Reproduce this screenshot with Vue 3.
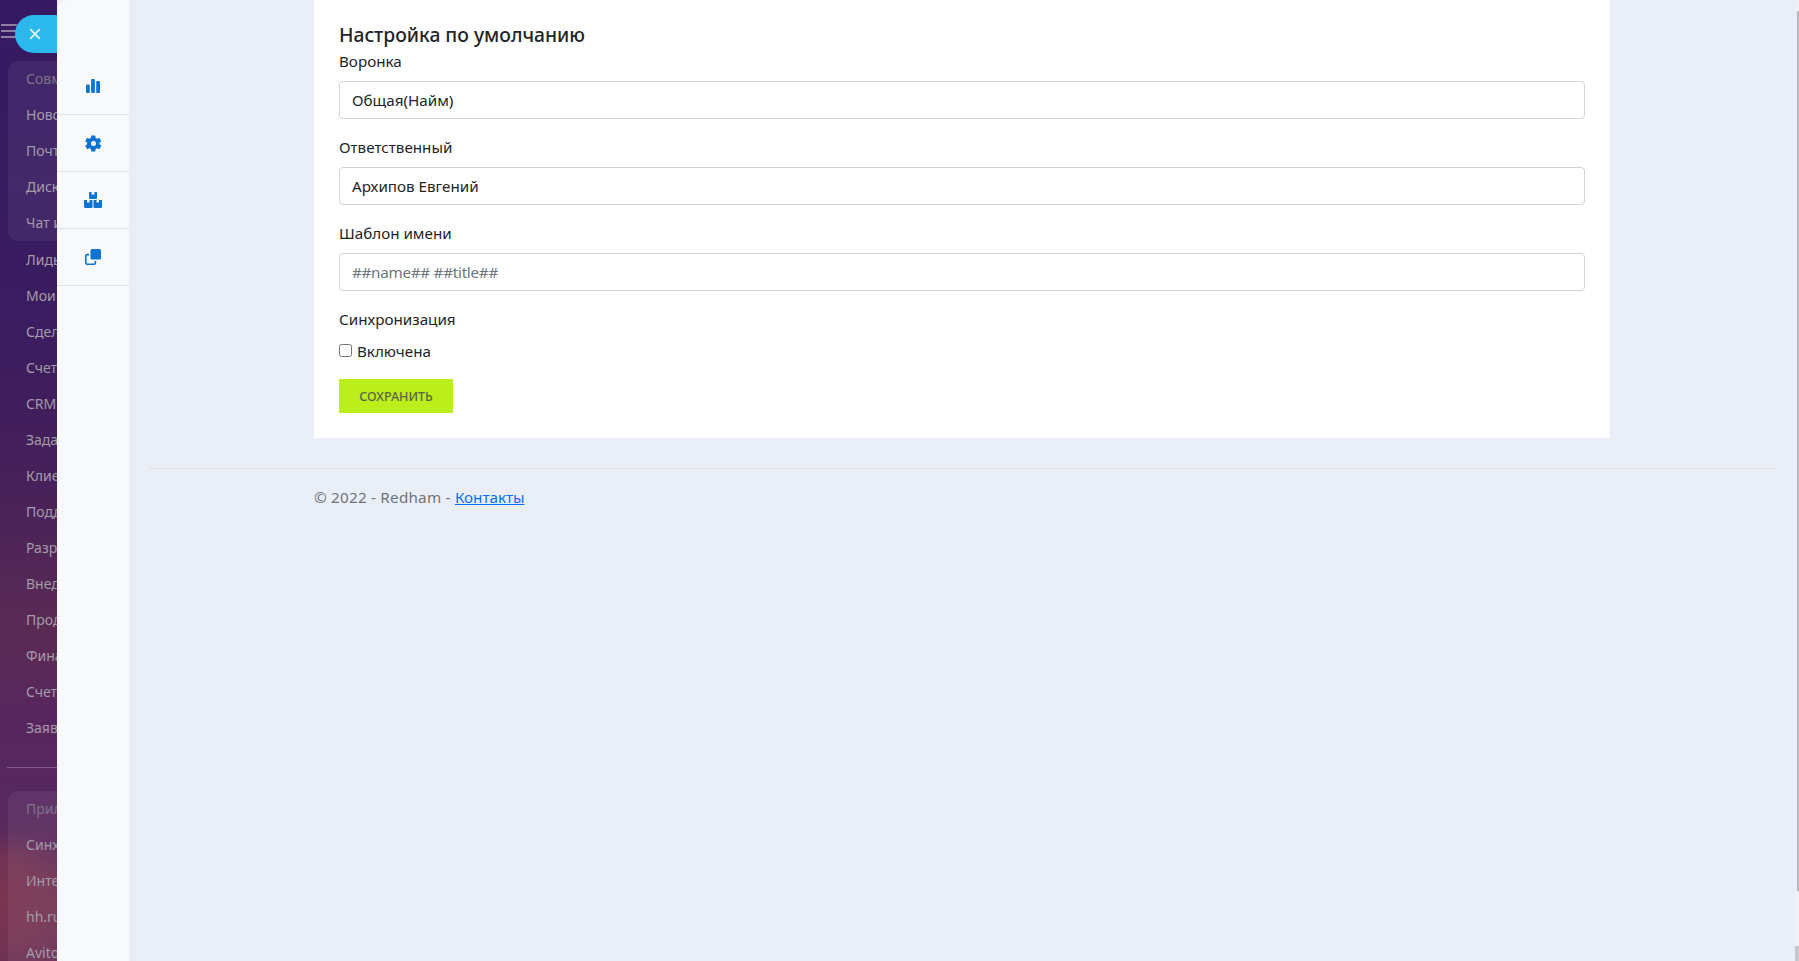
<script setup>
const topItems = ['Новости', 'Почта', 'Диск', 'Чат и звонки']
const midItems = ['Лиды', 'Мои', 'Сделки', 'Счета', 'CRM', 'Задачи', 'Клиенты', 'Поддержка', 'Разработка', 'Внедрение', 'Продажи', 'Финансы', 'Счета', 'Заявки']
const appItems = ['Синхронизация', 'Интеграции', 'hh.ru', 'Avito']
</script>

<template>
  <div class="page">
    <aside class="portal">
      <div class="portal__burger"><i></i><i></i><i></i></div>
      <div class="portal__group">
        <div class="portal__item portal__item--muted">Совместная</div>
        <div v-for="item in topItems" :key="item" class="portal__item">{{ item }}</div>
      </div>
      <div class="portal__list">
        <div v-for="(item, i) in midItems" :key="i" class="portal__item">{{ item }}</div>
      </div>
      <div class="portal__line"></div>
      <div class="portal__group portal__group--apps">
        <div class="portal__item portal__item--muted">Приложения</div>
        <div v-for="item in appItems" :key="item" class="portal__item">{{ item }}</div>
      </div>
    </aside>

    <button type="button" class="close-tab" aria-label="Закрыть">
      <svg width="12" height="12" viewBox="0 0 12 12">
        <path d="M1.200 1.200l9.600 9.600M10.800 1.200l-9.600 9.600" stroke="#eaf8fe" stroke-width="1.700" fill="none" />
      </svg>
    </button>

    <nav class="rail">
      <a class="rail__link">
        <svg width="14" height="14" viewBox="0 0 14 14">
          <rect x="0" y="5.500" width="3.800" height="8.500" rx="1" />
          <rect x="5.100" y="0" width="3.800" height="14" rx="1" />
          <rect x="10.200" y="2" width="3.800" height="12" rx="1" />
        </svg>
      </a>
      <a class="rail__link">
        <svg width="19" height="19" viewBox="0 0 24 24">
          <path d="M19.400 13a7.600 7.600 0 0 0 0-2l2.200-1.600a.6.6 0 0 0 .1-.7l-2.100-3.600a.6.6 0 0 0-.7-.2l-2.500 1a7.500 7.500 0 0 0-1.700-1l-.4-2.700a.5.5 0 0 0-.5-.4H9.600a.5.5 0 0 0-.5.4l-.4 2.700a7.500 7.500 0 0 0-1.700 1l-2.500-1a.6.6 0 0 0-.7.2L1.700 8.700a.6.6 0 0 0 .1.7L4 11a7.600 7.600 0 0 0 0 2l-2.200 1.600a.6.6 0 0 0-.1.7l2.100 3.600a.6.6 0 0 0 .7.2l2.500-1a7.500 7.500 0 0 0 1.700 1l.4 2.700a.5.5 0 0 0 .5.4h4.200a.5.5 0 0 0 .5-.4l.4-2.700a7.500 7.500 0 0 0 1.700-1l2.500 1a.6.6 0 0 0 .7-.2l2.100-3.600a.6.6 0 0 0-.1-.7zM12 15.200a3.200 3.200 0 1 1 0-6.400 3.200 3.200 0 0 1 0 6.400z" />
        </svg>
      </a>
      <a class="rail__link">
        <svg width="18" height="16" viewBox="0 0 18 16">
          <path d="M5 .5a.5.5 0 0 1 .5-.5h2v2.500h3V0h2a.5.5 0 0 1 .5.5V6a1 1 0 0 1-1 1H6a1 1 0 0 1-1-1z" />
          <path d="M0 8.500A.5.5 0 0 1 .5 8H3v2.500h2.500V8h2.500a.5.5 0 0 1 .5.5V15a1 1 0 0 1-1 1H1.500A1.500 1.500 0 0 1 0 14.500z" />
          <path d="M9.500 8.500A.5.5 0 0 1 10 8h2.500v2.500H15V8h2.500a.5.5 0 0 1 .5.5v6a1.500 1.500 0 0 1-1.500 1.500h-6a1 1 0 0 1-1-1z" />
        </svg>
      </a>
      <a class="rail__link">
        <svg width="16" height="16" viewBox="0 0 16 16">
          <rect x="5.500" y="0" width="10.500" height="10.500" rx="1.500" />
          <path d="M4 4.800H2.200A2.200 2.200 0 0 0 0 7v6.800A2.200 2.200 0 0 0 2.200 16H9a2.200 2.200 0 0 0 2.200-2.200V12H9.600v1.800a.6.6 0 0 1-.6.6H2.200a.6.6 0 0 1-.6-.6V7a.6.6 0 0 1 .6-.6H4z" />
        </svg>
      </a>
    </nav>

    <main class="content">
      <div class="wrap">
        <section class="card">
          <h2 class="card__title">Настройка по умолчанию</h2>
          <div class="field">
            <label class="field__label">Воронка</label>
            <input class="field__input" type="text" value="Общая(Найм)" />
          </div>
          <div class="field">
            <label class="field__label">Ответственный</label>
            <input class="field__input" type="text" value="Архипов Евгений" />
          </div>
          <div class="field">
            <label class="field__label">Шаблон имени</label>
            <input class="field__input" type="text" placeholder="##name## ##title##" />
          </div>
          <div class="field">
            <label class="field__label">Синхронизация</label>
            <label class="check">
              <input type="checkbox" class="check__box" />
              Включена
            </label>
          </div>
          <button type="button" class="save-btn">СОХРАНИТЬ</button>
        </section>
      </div>
      <footer class="footer">
        <div class="footer__inner">© 2022 - Redham - <a class="footer__link" href="#">Контакты</a></div>
      </footer>
    </main>

    <div class="scroll">
      <div class="scroll__top"></div>
      <div class="scroll__thumb"></div>
      <div class="scroll__track"></div>
      <div class="scroll__end"></div>
    </div>
  </div>
</template>

<style>
html,
body {
  margin: 0;
  overflow: hidden;
}
</style>

<style scoped>
.page {
  position: relative;
  display: flex;
  width: 1799px;
  height: 961px;
  overflow: hidden;
  background: #eaeef6;
  font-family: "Noto Sans", "Open Sans", sans-serif;
  color: #212529;
}

.portal {
  position: relative;
  flex: 0 0 57px;
  width: 57px;
  overflow: hidden;
  padding-top: 61px;
  box-sizing: border-box;
  white-space: nowrap;
  background:
    radial-gradient(ellipse 90px 70px at 0 900px, #7a3550 0, rgba(122, 53, 80, 0.7) 60%, rgba(122, 53, 80, 0) 100%),
    linear-gradient(to bottom, #351a62 0, #3a1c60 320px, #45205a 470px, #5a2a54 630px, #58265f 720px, #56285f 800px, #6a2f55 961px);
}

.portal__burger {
  position: absolute;
  top: 24px;
  left: 1px;
  display: flex;
  flex-direction: column;
  gap: 4px;
}

.portal__burger i {
  display: block;
  width: 16px;
  height: 2px;
  background: #8f7fa0;
}

.portal__group {
  margin-left: 8px;
  width: 200px;
  border-radius: 10px;
  background: rgba(255, 255, 255, 0.06);
}

.portal__group--apps {
  margin-top: 23px;
  padding-bottom: 20px;
}

.portal__list {
  margin-top: 1px;
}

.portal__line {
  margin: 21px 0 0 7px;
  height: 1px;
  width: 200px;
  background: rgba(255, 255, 255, 0.25);
}

.portal__item {
  height: 36px;
  line-height: 36px;
  padding-left: 18px;
  font-size: 14px;
  color: #a59ba9;
}

.portal__item--muted {
  color: #7f7289;
}

.portal__list .portal__item {
  padding-left: 26px;
}

.close-tab {
  position: absolute;
  top: 15px;
  left: 15px;
  width: 60px;
  height: 38px;
  padding: 0 0 0 14px;
  border: 0;
  border-radius: 19px 0 0 19px;
  background: #2bb8ec;
  text-align: left;
}

.close-tab svg {
  display: block;
}

.rail {
  position: relative;
  flex: 0 0 72px;
  width: 72px;
  box-sizing: border-box;
  padding-top: 58px;
  background: #f8f9fb;
  border-top-left-radius: 10px;
}

.rail__link {
  display: flex;
  align-items: center;
  justify-content: center;
  height: 56px;
  border-bottom: 1px solid #dfe1e5;
}

.rail__link svg {
  fill: #0b74d1;
}

.content {
  flex: 1;
  min-width: 0;
  padding: 0 24px 0 20px;
}

.wrap {
  width: 1296px;
  margin-left: 165px;
}

.card {
  box-sizing: border-box;
  height: 438px;
  padding: 21px 25px 0;
  background: #fff;
}

.card__title {
  margin: 0;
  font-size: 19.300px;
  line-height: 28px;
  font-weight: 500;
  color: #212529;
}

.field {
  margin-bottom: 16px;
}

.field__label {
  display: block;
  margin-bottom: 8px;
  font-size: 15.200px;
  line-height: 24px;
}

.field__input {
  display: block;
  box-sizing: border-box;
  width: 100%;
  height: 38px;
  padding: 6px 12px;
  border: 1px solid #ced4da;
  border-radius: 4px;
  font-family: inherit;
  font-size: 15.200px;
  color: #212529;
  background: #fff;
}

.field__input::placeholder {
  color: #6c757d;
  letter-spacing: -0.25px;
}

.check {
  display: flex;
  align-items: center;
  font-size: 15.200px;
  line-height: 24px;
}

.check__box {
  width: 13px;
  height: 13px;
  margin: -1px 5px 0 0;
}

.save-btn {
  display: block;
  width: 114px;
  height: 34px;
  padding: 0;
  border: 0;
  background: #bbee1a;
  font-family: inherit;
  font-size: 12.500px;
  font-weight: 500;
  color: #5a6348;
}

.footer {
  margin-top: 30px;
  border-top: 1px solid #dee2e6;
}

.footer__inner {
  margin-left: 165px;
  padding-top: 16px;
  font-size: 15.200px;
  line-height: 24px;
  letter-spacing: 0.25px;
  color: #6c757d;
}

.footer__link {
  letter-spacing: 0;
  color: #0d6efd;
}

.scroll {
  position: absolute;
  top: 0;
  right: 0;
  bottom: 0;
  width: 4px;
  display: flex;
  flex-direction: column;
}

.scroll__top {
  height: 11px;
  margin-left: 1px;
  background: #f1f1f1;
}

.scroll__thumb {
  height: 880px;
  margin-left: 2px;
  background: #b9b9b9;
}

.scroll__track {
  height: 55px;
  background: #f1f1f1;
}

.scroll__end {
  flex: 1;
  background: #c8c8c8;
}
</style>
